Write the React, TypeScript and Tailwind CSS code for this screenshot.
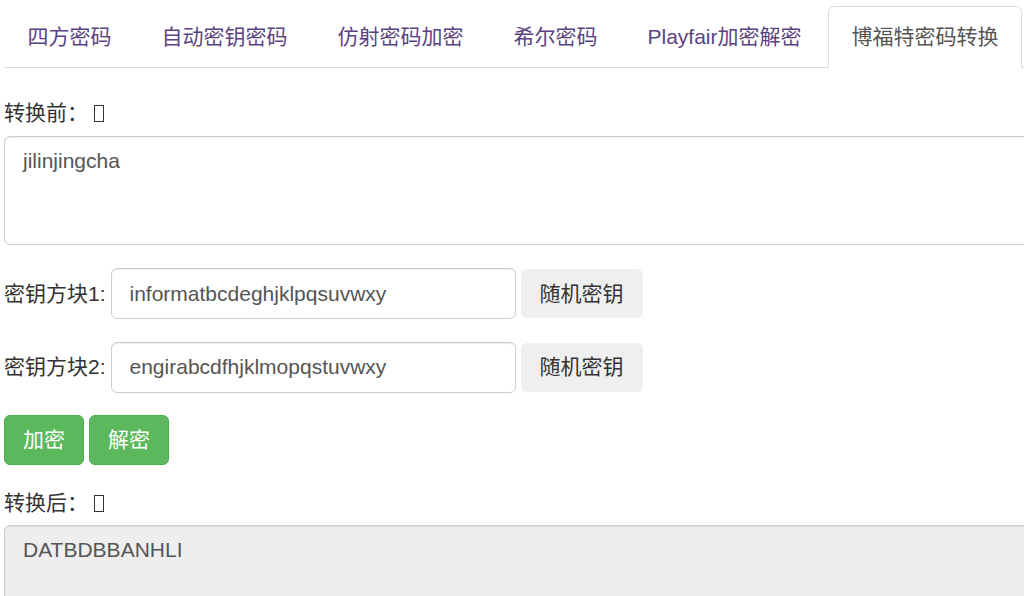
const tabs = ["四方密码", "自动密钥密码", "仿射密码加密", "希尔密码", "Playfair加密解密", "博福特密码转换"];

function Tofu() {
  return <span className="inline-block w-[10px] h-[17px] border-[1.5px] border-[#333] align-[-2px] ml-[6px]" />;
}

function KeyRow({ label, value }: { label: string; value: string }) {
  return (
    <div className="flex items-center gap-[5px] mb-[22.5px]">
      <label className="text-[#333]">{label}</label>
      <input
        readOnly
        value={value}
        className="w-[405px] h-[51px] px-[18px] border-[1.5px] border-[#ccc] rounded-[6px] text-[#555] bg-white outline-none shadow-[inset_0_1px_1px_rgba(0,0,0,0.075)]"
      />
      <button className="h-[49px] px-[19px] rounded-[6px] bg-[#efefef] text-[#333] leading-[30px]">随机密钥</button>
    </div>
  );
}

export default function App() {
  return (
    <div
      className="w-full h-[596px] overflow-hidden bg-white text-[21px] leading-[30px] text-[#333]"
      style={{ fontFamily: '"Liberation Sans", "Noto Sans CJK SC", sans-serif' }}
    >
      <div className="pl-[4px] w-[1080px]">
        {/* Tab bar */}
        <ul className="flex mt-[6px] border-b border-[#ddd]">
          {tabs.map((t, i) => {
            const active = i === tabs.length - 1;
            return (
              <li key={t} className="mr-[3px] -mb-px">
                <a
                  className={`block px-[22.5px] py-[15px] leading-[30px] border rounded-t-[6px] ${
                    active
                      ? "border-[#ddd] border-b-white bg-white text-[#555]"
                      : "border-transparent text-[#5b4282]"
                  }`}
                >
                  {t}
                </a>
              </li>
            );
          })}
        </ul>

        {/* Tab content */}
        <div className="pt-[30px]">
          <label className="block mb-[8px]">
            转换前：<Tofu />
          </label>
          <textarea
            readOnly
            value="jilinjingcha"
            className="block w-[1060px] h-[109px] px-[18px] py-[9px] border-[1.5px] border-[#ccc] rounded-[6px] text-[#555] resize-none outline-none mb-[23px] shadow-[inset_0_1px_1px_rgba(0,0,0,0.075)]"
          />

          <KeyRow label="密钥方块1:" value="informatbcdeghjklpqsuvwxy" />
          <KeyRow label="密钥方块2:" value="engirabcdfhjklmopqstuvwxy" />

          <div className="flex gap-[5px]">
            <button className="w-[80px] h-[50px] rounded-[6px] bg-[#5cb85c] border border-[#4cae4c] text-white">加密</button>
            <button className="w-[80px] h-[50px] rounded-[6px] bg-[#5cb85c] border border-[#4cae4c] text-white">解密</button>
          </div>

          <label className="block mt-[23px] mb-[7px]">
            转换后：<Tofu />
          </label>
          <textarea
            readOnly
            value="DATBDBBANHLI"
            className="block w-[1060px] h-[109px] px-[18px] py-[9px] border-[1.5px] border-[#ccc] rounded-[6px] bg-[#eee] text-[#555] resize-none outline-none shadow-[inset_0_1px_1px_rgba(0,0,0,0.075)]"
          />
        </div>
      </div>
    </div>
  );
}
